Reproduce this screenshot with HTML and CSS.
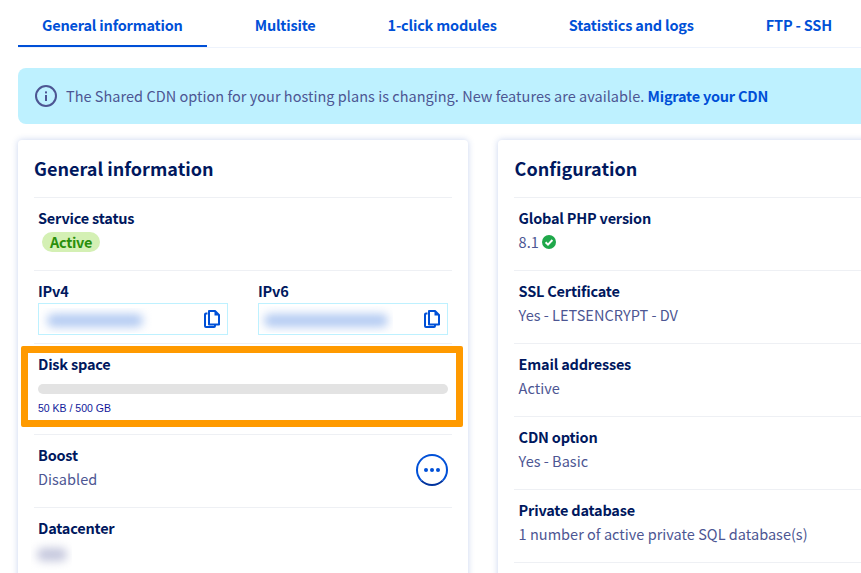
FILE: index.html
```html
<!DOCTYPE html>
<html lang="en">
<head>
<meta charset="utf-8">
<title>General information</title>
<link rel="stylesheet" href="styles.css">
</head>
<body>
<div class="page">
  <nav class="tabs">
    <a class="tab tab-active">General information</a>
    <a class="tab">Multisite</a>
    <a class="tab">1-click modules</a>
    <a class="tab">Statistics and logs</a>
    <a class="tab">FTP - SSH</a>
  </nav>
  <div class="banner">
    <svg class="banner-icon" viewBox="0 0 24 24" width="24" height="24"><circle cx="12" cy="12" r="10" fill="none" stroke="#4d5693" stroke-width="2"/><rect x="11" y="11" width="2" height="6" fill="#4d5693"/><rect x="11" y="7.4" width="2" height="2" fill="#4d5693"/></svg>
    <span>The Shared CDN option for your hosting plans is changing. New features are available. <a class="link">Migrate your CDN</a></span>
  </div>
  <div class="cards">
    <section class="card">
      <h2>General information</h2>
      <div class="row">
        <div class="label">Service status</div>
        <span class="badge">Active</span>
      </div>
      <div class="row">
        <div class="ip-grid">
          <div>
            <div class="label">IPv4</div>
            <div class="ip-field">
              <span class="mask"><span class="smear smear-v4"></span></span>
              <svg class="copy" viewBox="0 0 16 18" width="16" height="18"><path d="M3.500 3.500H2a1 1 0 0 0-1 1V16a1 1 0 0 0 1 1h8a1 1 0 0 0 1-1v-1" fill="none" stroke="#0050d7" stroke-width="2"/><path d="M5 1h6l4 4v9.500H5z" fill="none" stroke="#0050d7" stroke-width="2" stroke-linejoin="round"/><path d="M10.500 1v4.500h4.500" fill="#0050d7"/></svg>
            </div>
          </div>
          <div>
            <div class="label">IPv6</div>
            <div class="ip-field">
              <span class="mask mask-wide"><span class="smear smear-v6"></span></span>
              <svg class="copy" viewBox="0 0 16 18" width="16" height="18"><path d="M3.500 3.500H2a1 1 0 0 0-1 1V16a1 1 0 0 0 1 1h8a1 1 0 0 0 1-1v-1" fill="none" stroke="#0050d7" stroke-width="2"/><path d="M5 1h6l4 4v9.500H5z" fill="none" stroke="#0050d7" stroke-width="2" stroke-linejoin="round"/><path d="M10.500 1v4.500h4.500" fill="#0050d7"/></svg>
            </div>
          </div>
        </div>
      </div>
      <div class="row row-disk">
        <div class="label">Disk space</div>
        <div class="bar"></div>
        <div class="bar-text">50 KB / 500 GB</div>
        <div class="highlight"></div>
      </div>
      <div class="row row-split">
        <div>
          <div class="label">Boost</div>
          <div class="value">Disabled</div>
        </div>
        <button class="more" type="button" aria-label="More"><span></span><span></span><span></span></button>
      </div>
      <div class="row">
        <div class="label">Datacenter</div>
        <div class="dc-mask"><span class="smear smear-dc"></span></div>
      </div>
    </section>
    <section class="card card-right">
      <h2>Configuration</h2>
      <div class="row">
        <div class="label">Global PHP version</div>
        <div class="value value-icon">8.1
          <svg viewBox="0 0 14 14" width="14" height="14"><circle cx="7" cy="7" r="7" fill="#1fa84a"/><path d="M3.600 7.200l2.400 2.400 4.400-4.600" fill="none" stroke="#fff" stroke-width="2"/></svg>
        </div>
      </div>
      <div class="row">
        <div class="label">SSL Certificate</div>
        <div class="value">Yes - LETSENCRYPT - DV</div>
      </div>
      <div class="row">
        <div class="label">Email addresses</div>
        <div class="value">Active</div>
      </div>
      <div class="row">
        <div class="label">CDN option</div>
        <div class="value">Yes - Basic</div>
      </div>
      <div class="row">
        <div class="label">Private database</div>
        <div class="value">1 number of active private SQL database(s)</div>
      </div>
      <div class="row"></div>
    </section>
  </div>
</div>
</body>
</html>
```
FILE: styles.css
```css
html, body {
  margin: 0;
  height: 573px;
  overflow: hidden;
  background: #fff;
}
body {
  font-family: "Noto Sans CJK SC", "Noto Sans", sans-serif;
  font-size: 14.5px;
  line-height: 24px;
  letter-spacing: .025px;
  color: #4d5693;
}
.page {
  width: 1000px;
  padding-left: 18px;
}
.tabs {
  display: flex;
  gap: 24px;
  height: 47px;
  border-bottom: 1px solid #eef3fc;
  width: 982px;
}
.tab {
  padding: 13px 24px 0;
  height: 32px;
  color: #0050d7;
  font-weight: 600;
  line-height: 24px;
  letter-spacing: -0.19px;
  border-bottom: 2px solid transparent;
  white-space: nowrap;
}
.tab-active {
  border-bottom-color: #0050d7;
}
.banner {
  display: flex;
  align-items: center;
  gap: 8px;
  margin-top: 20px;
  height: 56px;
  padding-left: 16px;
  background: #bef1ff;
  border-radius: 8px 0 0 8px;
}
.banner-icon { flex: none; }
.link {
  color: #0050d7;
  font-weight: 700;
  letter-spacing: -0.22px;
}
.cards {
  display: grid;
  grid-template-columns: 450px 450px;
  gap: 30px;
  margin-top: 16px;
}
.card {
  background: #fff;
  border-radius: 4px;
  box-shadow: 0 0 6px 0 rgba(40, 89, 192, .25);
  padding: 16px 16px 0;
  height: 600px;
}
.card h2 {
  margin: 0;
  height: 41px;
  color: #00185e;
  font-size: 18px;
  font-weight: 700;
  line-height: 25px;
}
.row {
  position: relative;
  border-top: 1px solid #eef0f4;
  padding: 8px 4px 16px;
  height: 48px;
}
.card-right h2 { padding-left: .6px; }
.card-right .row { padding-left: 4.6px; }
.label {
  color: #00185e;
  font-weight: 600;
  line-height: 24px;
  letter-spacing: -0.2px;
}
.value { line-height: 24px; }
.value-icon {
  display: flex;
  align-items: center;
  gap: 3px;
}
.badge {
  display: inline-block;
  margin: 2px 0 0 4px;
  padding: 0 8px;
  height: 20px;
  line-height: 20px;
  border-radius: 10px;
  background: #d4f0b4;
  color: #2a8f0b;
  font-weight: 600;
  letter-spacing: -0.3px;
}
.ip-grid {
  display: grid;
  grid-template-columns: 190px 190px;
  gap: 30px;
}
.ip-field {
  position: relative;
  display: flex;
  align-items: center;
  justify-content: flex-end;
  box-sizing: border-box;
  height: 32px;
  padding-right: 7px;
  border: 1px solid #bef1ff;
}
.copy { flex: none; }
.mask {
  position: absolute;
  left: 0;
  top: 4px;
  width: 113px;
  height: 25px;
  overflow: hidden;
}
.mask-wide {
  top: 2px;
  width: 134px;
  height: 27px;
}
.smear {
  display: block;
  border-radius: 6px;
  filter: blur(5px);
  background: #b2caf2;
}
.smear-v4 { margin: 6px 0 0 8px; width: 96px; height: 13px; }
.smear-v6 { margin: 8px 0 0 5px; width: 124px; height: 13px; }
.row-disk { height: 66px; }
.bar {
  margin-top: 8px;
  height: 10px;
  border-radius: 5px;
  background: #e3e3e3;
}
.bar-text {
  margin-top: 7px;
  font-family: "Liberation Sans", Arial, sans-serif;
  font-size: 10.5px;
  line-height: 14px;
  letter-spacing: 0;
  color: #10189a;
}
.highlight {
  position: absolute;
  left: -13px;
  right: -11px;
  top: 2px;
  height: 67px;
  border: 7px solid #ff9a00;
  border-radius: 2px;
  pointer-events: none;
}
.row-split {
  display: flex;
  justify-content: space-between;
  align-items: center;
}
.more {
  display: flex;
  align-items: center;
  justify-content: center;
  gap: 2px;
  box-sizing: border-box;
  width: 32px;
  height: 32px;
  margin-top: 6px;
  padding: 0;
  background: #fff;
  border: 2px solid #0050d7;
  border-bottom-color: #00339e;
  border-radius: 50%;
}
.more span {
  width: 4px;
  height: 4px;
  border-radius: 50%;
  background: #0050d7;
}
.dc-mask {
  width: 41px;
  height: 30px;
  margin: 0 0 0 -7px;
  overflow: hidden;
}
.smear-dc { margin: 8px 0 0 6px; width: 30px; height: 13px; filter: blur(5px); background: #c3c6dc; }
```
